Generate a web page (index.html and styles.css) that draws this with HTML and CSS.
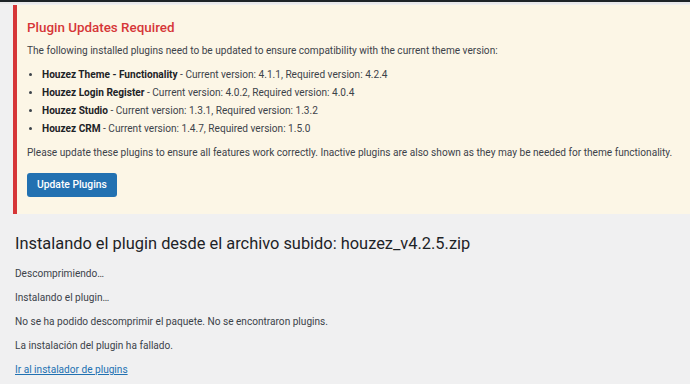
FILE: index.html
```html
<!DOCTYPE html>
<html>
<head>
    <title>Instalar plugin</title>
    <link rel="stylesheet" href="styles.css">
</head>
<body>
    <div class="topbar"></div>
    <div class="wrap">
        <div class="notice">
            <h2>Plugin Updates Required</h2>
            <p>The following installed plugins need to be updated to ensure compatibility with the current theme version:</p>
            <ul>
                <li><strong>Houzez Theme - Functionality</strong> - Current version: 4.1.1, Required version: 4.2.4</li>
                <li><strong>Houzez Login Register</strong> - Current version: 4.0.2, Required version: 4.0.4</li>
                <li><strong>Houzez Studio</strong> - Current version: 1.3.1, Required version: 1.3.2</li>
                <li><strong>Houzez CRM</strong> - Current version: 1.4.7, Required version: 1.5.0</li>
            </ul>
            <p>Please update these plugins to ensure all features work correctly. Inactive plugins are also shown as they may be needed for theme functionality.</p>
            <a class="button" href="#">Update Plugins</a>
        </div>

        <h1>Instalando el plugin desde el archivo subido: houzez_v4.2.5.zip</h1>
        <p>Descomprimiendo…</p>
        <p>Instalando el plugin…</p>
        <p>No se ha podido descomprimir el paquete. No se encontraron plugins.</p>
        <p>La instalación del plugin ha fallado.</p>
        <p><a href="#">Ir al instalador de plugins</a></p>
    </div>
</body>
</html>
```

FILE: styles.css
```css
body {
    margin: 0;
    background: #f0f0f1;
    font-family: Roboto, "Noto Sans", sans-serif;
    font-size: 10.1px;
    color: #3c434a;
    overflow: hidden;
}

.topbar {
    height: 2px;
    background: #1d2327;
    border-bottom: 2px solid #e8e8ea;
}

.wrap {
    padding: 1px 0 0 15px;
}

.notice {
    margin: 0 -10px 0 -2px;
    background: #fcf6e6;
    border-left: 4px solid #d63638;
    padding: 14px 10px 17px 10px;
}

.notice h2 {
    margin: 0 0 6px;
    font-size: 13.4px;
    line-height: 18px;
    font-weight: 500;
    color: #d63638;
}

.notice p {
    margin: 0 0 7px;
    line-height: 16px;
}

.notice ul {
    margin: 0 0 7px;
    padding-left: 15px;
    line-height: 18px;
}

.notice strong {
    color: #1d2327;
    font-weight: 700;
}

.button {
    display: inline-block;
    margin-top: 5px;
    background: #2271b1;
    color: #fff;
    border-radius: 3px;
    padding: 0 10px;
    line-height: 24px;
    font-size: 10.3px;
    font-weight: 500;
    text-decoration: none;
}

h1 {
    margin: 18px 0 10px;
    font-size: 16.4px;
    line-height: 24px;
    font-weight: 400;
    color: #1d2327;
}

.wrap > p {
    margin: 0 0 8px;
    line-height: 16px;
}

.wrap > p a {
    color: #2271b1;
}
```
